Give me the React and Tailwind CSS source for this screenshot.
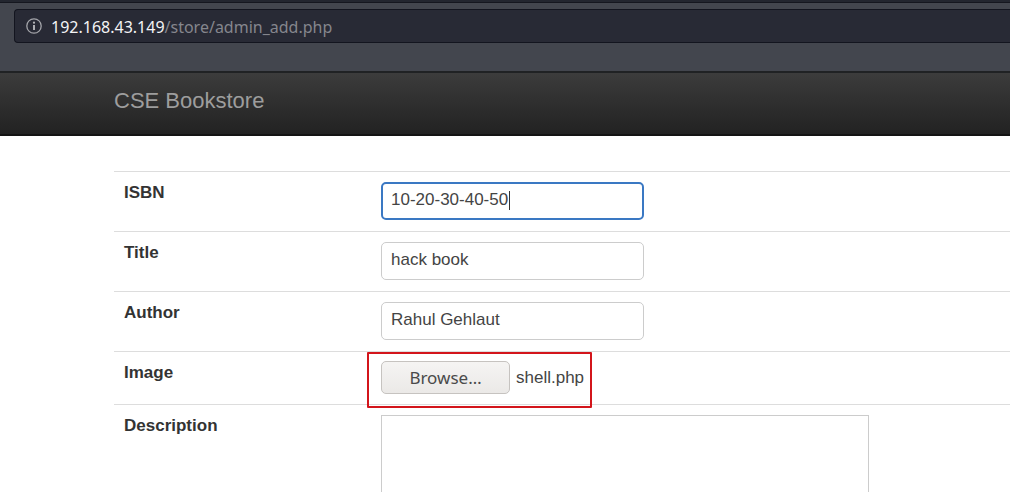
const inputBase =
  'block h-[38px] w-[263px] rounded-[5px] bg-white pb-[2px] text-[17px] text-[#444] outline-none';

function AddressBar() {
  return (
    <div className="flex h-[71px] flex-col border-t-2 border-[#23262f] bg-[#43464e]">
      <div className="h-px bg-[#15171f]" />
      <div className="ml-[14px] mt-[6px] flex h-[34px] items-center gap-[9px] rounded-l-[4px] border border-r-0 border-[#13151f] bg-[#282a35] pl-[11px]">
        <svg className="h-4 w-4 shrink-0" viewBox="0 0 16 16" fill="none" aria-hidden>
          <circle cx="8" cy="8" r="7.2" stroke="#a3a4a9" strokeWidth="1.3" />
          <circle cx="8" cy="4.7" r="1.1" fill="#b5b6ba" />
          <path d="M8 7v5" stroke="#b5b6ba" strokeWidth="1.9" />
        </svg>
        <div className="whitespace-nowrap pt-px font-['Noto_Sans',sans-serif] text-[16px] leading-6 text-[#85868d]">
          <span className="text-[#f4f4f5]">192.168.43.149</span>/store/admin_add.php
        </div>
      </div>
    </div>
  );
}

function Navbar() {
  return (
    <nav className="flex h-[65px] items-center border-b-2 border-t-2 border-b-[#141414] border-t-[#202224] bg-linear-to-b from-[#3c3c3c] to-[#222] pb-[6px] pl-[114px]">
      <a href="#" className="text-[22px] leading-7 text-[#9d9d9d]">
        CSE Bookstore
      </a>
    </nav>
  );
}

function Row({ id, label, children }) {
  return (
    <tr className="border-t border-[#ddd] align-top">
      <th scope="row" className="w-[257px] px-[10px] pt-[9px] text-left text-[17px] font-bold leading-6 text-[#333]">
        <label htmlFor={id}>{label}</label>
      </th>
      {children}
    </tr>
  );
}

export default function App() {
  return (
    <div className="overflow-hidden bg-white font-['Liberation_Sans',Arial,sans-serif]">
      <AddressBar />
      <Navbar />
      <form className="pl-[114px] pt-[35px]">
        <table className="w-full table-fixed border-collapse">
          <tbody>
            <Row id="isbn" label="ISBN">
              <td className="px-[10px] pb-[11px] pt-[10px]">
                <div className="relative">
                  <input
                    id="isbn"
                    type="text"
                    defaultValue="10-20-30-40-50"
                    className={`${inputBase} border-2 border-[#3a78c3] px-[8px]`}
                  />
                  <span className="absolute left-[128px] top-[9px] h-[19px] w-px bg-[#333]" />
                </div>
              </td>
            </Row>
            <Row id="title" label="Title">
              <td className="px-[10px] pb-[11px] pt-[10px]">
                <input id="title" type="text" defaultValue="hack book" className={`${inputBase} border border-[#ccc] px-[9px]`} />
              </td>
            </Row>
            <Row id="author" label="Author">
              <td className="px-[10px] pb-[11px] pt-[10px]">
                <input id="author" type="text" defaultValue="Rahul Gehlaut" className={`${inputBase} border border-[#ccc] px-[9px]`} />
              </td>
            </Row>
            <Row id="image" label="Image">
              <td className="px-[10px] pb-[10px] pt-[9px]">
                <div className="relative flex w-fit items-center gap-[6px]">
                  <button
                    id="image"
                    type="button"
                    className="h-[33px] w-[129px] rounded-[5px] border border-[#c6c3c0] bg-linear-to-b from-[#f5f4f3] to-[#ebe9e7] font-['Noto_Sans',sans-serif] text-[17px] leading-6 text-[#4a4a4a]"
                  >
                    Browse…
                  </button>
                  <span className="text-[17px] leading-6 text-[#444]">shell.php</span>
                  <div className="pointer-events-none absolute -bottom-[14px] -left-[14px] -right-[8px] -top-[9px] rounded-[1px] border-2 border-[#d3151b]" />
                </div>
              </td>
            </Row>
            <Row id="description" label="Description">
              <td className="px-[10px] pt-[10px]">
                <textarea
                  id="description"
                  className="block h-[77px] w-[488px] max-w-full resize-none border border-b-0 border-[#ccc] bg-white p-[10px] text-[17px] text-[#444] outline-none"
                />
              </td>
            </Row>
          </tbody>
        </table>
      </form>
    </div>
  );
}
